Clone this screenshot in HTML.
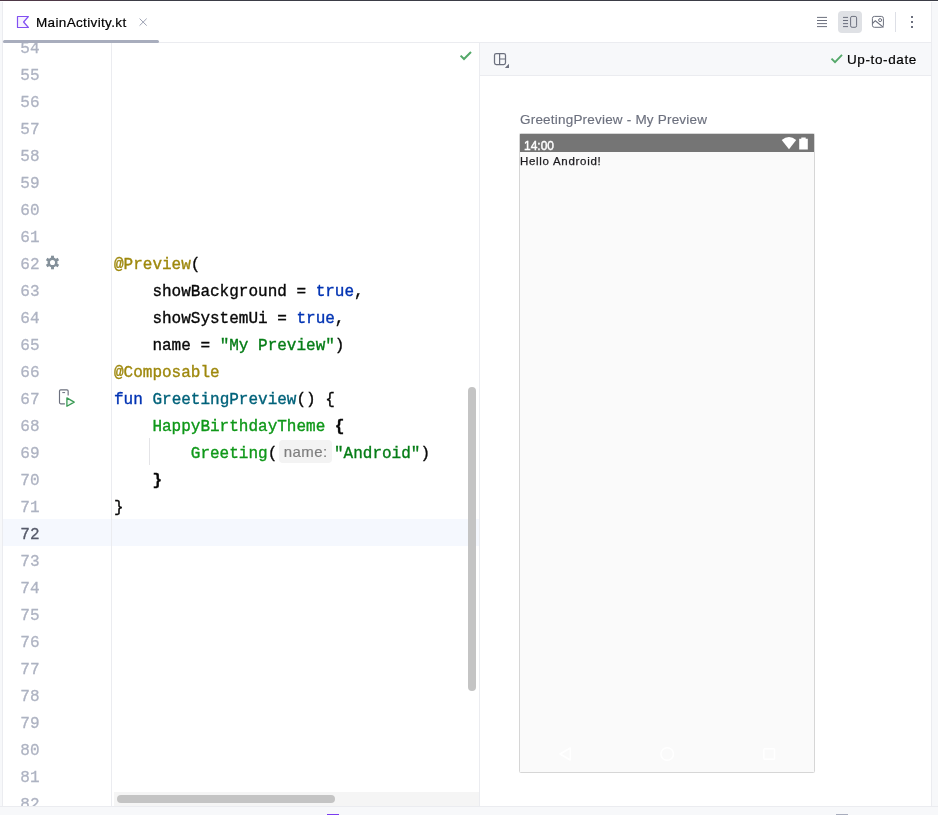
<!DOCTYPE html>
<html><head><meta charset="utf-8"><title>MainActivity.kt</title>
<style>
*{box-sizing:border-box;margin:0;padding:0}
html,body{width:938px;height:815px;overflow:hidden;background:#fff}
body{position:relative;font-family:"Liberation Sans",sans-serif;font-size:13px;color:#000}
.abs{position:absolute}
#tabname,#uptodate,#ptitle,#clock,#hello,#editor{will-change:transform}
#topline{left:0;top:0;width:938px;height:1px;background:linear-gradient(90deg,#4e3846 0,#4e3846 60px,#3b3d46 140px,#3b3d46 100%)}
#lstrip{left:0;top:2px;width:3px;height:804px;background:#f7f8fa;border-right:1px solid #ebecf0}
#rstrip{left:931px;top:2px;width:7px;height:804px;background:#f7f8fa;border-left:1px solid #ebecf0}
#tabborder{left:3px;top:42px;width:928px;height:1px;background:#ebecf0}
#tabul{left:3px;top:40px;width:156px;height:3px;background:#a8adbd;border-radius:1.5px}
#tabname{-webkit-text-stroke:0.2px #000;left:36px;top:15px;height:16px;line-height:16px;font-size:13.5px;letter-spacing:0.35px;color:#000;white-space:nowrap}
#vdiv{left:479px;top:43px;width:1px;height:763px;background:#ebecf0}
#ptool{left:480px;top:43px;width:451px;height:33px;background:#f7f8fa;border-bottom:1px solid #ebecf0}
#bottom{left:0;top:806px;width:938px;height:9px;background:#f7f8fa;border-top:1px solid #ebecf0}
#gutterline{left:111px;top:43px;width:1px;height:763px;background:#ebecf0}
#editor{left:3px;top:43px;width:476px;height:763px;overflow:hidden}
#curline{left:0;top:476px;width:476px;height:27px;background:#f5f8fe}
.ln{position:absolute;margin-top:3px;left:0;width:36.5px;-webkit-text-stroke:0.3px;text-align:right;height:27px;line-height:27px;font-family:"Liberation Mono",monospace;font-size:16px;color:#aeb3c2;white-space:pre}
.cl{position:absolute;margin-top:3px;left:111px;-webkit-text-stroke:0.35px;height:27px;line-height:27px;font-family:"Liberation Mono",monospace;font-size:16px;color:#080808;white-space:pre}
.an{color:#9e880d}.kw{color:#0033b3}.st{color:#067d17}.fn{color:#00627a}.cp{color:#0f9819}
b{font-weight:bold}
#hint{position:absolute;left:276px;top:397px;width:53px;height:23px;border-radius:4px;background:#f3f3f3;color:#7f7f7f;-webkit-text-stroke:0.2px #7f7f7f;font-family:"Liberation Sans",sans-serif;font-size:15px;letter-spacing:0.4px;line-height:23px;text-align:center;padding-left:0.4px}
#vthumb{left:468px;top:387px;width:8px;height:304px;border-radius:4px;background:#c4c4c4}
#htrack{left:114px;top:792px;width:365px;height:14px;background:#f5f5f5}
#hthumb{left:117px;top:795px;width:218px;height:8px;border-radius:4px;background:#c4c4c4}
#ptitle{-webkit-text-stroke:0.15px #6c707e;left:520px;top:112px;height:16px;line-height:16px;font-size:13.5px;letter-spacing:0.2px;color:#6c707e;white-space:nowrap}
#phone{left:519px;top:133px;width:296px;height:640px;background:#fafafa;border:1px solid #d6d6d6;border-radius:1.5px}
#sbar{left:520px;top:134px;width:294px;height:18px;background:#757575}
#clock{left:524px;top:138px;height:16px;line-height:16px;font-size:12px;color:#fff;-webkit-text-stroke:0.4px #fff;white-space:nowrap}
#hello{left:520px;top:154px;height:15px;line-height:15px;font-size:11.5px;letter-spacing:0.7px;-webkit-text-stroke:0.25px #1c1b1f;color:#1c1b1f;white-space:nowrap}
#uptodate{-webkit-text-stroke:0.2px #000;left:847px;top:52px;height:16px;line-height:16px;font-size:13.5px;letter-spacing:0.62px;color:#000;white-space:nowrap}
#selbtn{left:838px;top:11px;width:24px;height:22px;border-radius:4px;background:#dfe1e5}
#tdiv{left:895px;top:12px;width:1px;height:20px;background:#dddfe6}
svg{position:absolute;overflow:visible}
</style></head><body>
<div id="topline" class="abs"></div>
<div id="lstrip" class="abs"></div>
<div id="rstrip" class="abs"></div>
<div id="tabborder" class="abs"></div>
<div id="tabul" class="abs"></div>
<div id="tabname" class="abs">MainActivity.kt</div>
<div id="ptool" class="abs"></div>
<div id="vdiv" class="abs"></div>
<div id="editor" class="abs">
<div id="curline" class="abs"></div>
<!--LINES-->
<div class="ln" style="top:-10px">54</div>
<div class="ln" style="top:17px">55</div>
<div class="ln" style="top:44px">56</div>
<div class="ln" style="top:71px">57</div>
<div class="ln" style="top:98px">58</div>
<div class="ln" style="top:125px">59</div>
<div class="ln" style="top:152px">60</div>
<div class="ln" style="top:179px">61</div>
<div class="ln" style="top:206px">62</div>
<div class="cl" style="top:206px"><span class="an">@Preview</span>(</div>
<div class="ln" style="top:233px">63</div>
<div class="cl" style="top:233px">    showBackground = <span class="kw">true</span>,</div>
<div class="ln" style="top:260px">64</div>
<div class="cl" style="top:260px">    showSystemUi = <span class="kw">true</span>,</div>
<div class="ln" style="top:287px">65</div>
<div class="cl" style="top:287px">    name = <span class="st">"My Preview"</span>)</div>
<div class="ln" style="top:314px">66</div>
<div class="cl" style="top:314px"><span class="an">@Composable</span></div>
<div class="ln" style="top:341px">67</div>
<div class="cl" style="top:341px"><span class="kw">fun</span> <span class="fn">GreetingPreview</span>() {</div>
<div class="ln" style="top:368px">68</div>
<div class="cl" style="top:368px">    <span class="cp">HappyBirthdayTheme</span> <b>{</b></div>
<div class="ln" style="top:395px">69</div>
<div class="cl" style="top:395px">        <span class="cp">Greeting</span>(</div>
<div id="hint">name:</div>
<div class="cl" style="top:395px;left:331px"><span class="st">"Android"</span>)</div>
<div class="ln" style="top:422px">70</div>
<div class="cl" style="top:422px">    <b>}</b></div>
<div class="ln" style="top:449px">71</div>
<div class="cl" style="top:449px">}</div>
<div class="ln" style="top:476px;color:#565a6a">72</div>
<div class="ln" style="top:503px">73</div>
<div class="ln" style="top:530px">74</div>
<div class="ln" style="top:557px">75</div>
<div class="ln" style="top:584px">76</div>
<div class="ln" style="top:611px">77</div>
<div class="ln" style="top:638px">78</div>
<div class="ln" style="top:665px">79</div>
<div class="ln" style="top:692px">80</div>
<div class="ln" style="top:719px">81</div>
<div class="ln" style="top:746px">82</div>
</div>
<div id="gutterline" class="abs"></div>
<div id="vthumb" class="abs"></div>
<div id="htrack" class="abs"></div>
<div id="hthumb" class="abs"></div>
<div id="selbtn" class="abs"></div>
<div id="tdiv" class="abs"></div>
<div id="uptodate" class="abs">Up-to-date</div>
<div id="ptitle" class="abs">GreetingPreview - My Preview</div>
<div id="phone" class="abs"></div>
<div id="sbar" class="abs"></div>
<div id="clock" class="abs">14:00</div>
<div id="hello" class="abs">Hello Android!</div>
<div id="bottom" class="abs"></div>
<!--ICONS-->
<svg id="ic-kt" style="left:16px;top:15px" width="14" height="14" viewBox="16 15 14 14"><path d="M17.5 16.5H28.4L23.6 22L28.4 27.5H17.5Z" fill="#f7f3ff" stroke="#8250f2" stroke-width="1.2" stroke-linejoin="round"/></svg>
<svg id="ic-close" style="left:138px;top:17px" width="10" height="10" viewBox="138 17 10 10"><path d="M139.6 18.6L146.7 25.6M146.7 18.6L139.6 25.6" stroke="#9da2b3" stroke-width="1" fill="none"/></svg>
<svg id="ic-ham" style="left:816px;top:15px" width="12" height="14" viewBox="816 15 12 14"><path d="M817 17.4H827M817 20.5H827M817 23.6H827M817 26.6H827" stroke="#6c707e" stroke-width="1" fill="none"/></svg>
<svg id="ic-split" style="left:842px;top:15px" width="16" height="14" viewBox="842 15 16 14"><path d="M843 17.4H848M843 20.5H848M843 23.6H848M843 26.6H848" stroke="#6c707e" stroke-width="1" fill="none"/><rect x="850.6" y="16.4" width="6" height="10.9" rx="1.5" fill="none" stroke="#6c707e" stroke-width="1"/></svg>
<svg id="ic-img" style="left:871px;top:15px" width="14" height="14" viewBox="871 15 14 14"><rect x="872.4" y="16.4" width="11" height="10.9" rx="2" fill="none" stroke="#6c707e" stroke-width="1"/><circle cx="880.1" cy="20.1" r="1.5" fill="none" stroke="#6c707e" stroke-width="1"/><path d="M872.4 23.5L875.3 20.7L883.5 27.4" fill="none" stroke="#6c707e" stroke-width="1.15"/></svg>
<svg id="ic-dots" style="left:910px;top:15px" width="4" height="14" viewBox="910 15 4 14"><path d="M911 16h2v2h-2zM911 21h2v2h-2zM911 26h2v2h-2z" fill="#6c707e"/></svg>
<svg id="ic-ok1" style="left:458px;top:50px" width="16" height="12" viewBox="458 50 16 12"><path d="M460.6 55.6L464 59L471 52" fill="none" stroke="#54a869" stroke-width="2"/></svg>
<svg id="ic-ok2" style="left:829px;top:52px" width="16" height="13" viewBox="829 52 16 13"><path d="M831.5 58.6L835 62.1L842 54.9" fill="none" stroke="#54a869" stroke-width="1.9"/></svg>
<svg id="ic-layout" style="left:493px;top:52px" width="18" height="18" viewBox="493 52 18 18"><rect x="494.5" y="53.5" width="11" height="11" rx="1.7" fill="none" stroke="#6c707e" stroke-width="1.25"/><path d="M499.6 53.5V64.5M499.6 59H505.5" stroke="#6c707e" stroke-width="1.2" fill="none"/><path d="M509 63.8V68H504.8Z" fill="#6c707e"/></svg>
<svg id="ic-gear" style="left:45px;top:255px" width="15" height="15" viewBox="-7.5 -7.5 15 15"><g fill="#84909a"><rect x="-1.45" y="-6.8" width="2.9" height="3"/><rect x="-1.45" y="-6.8" width="2.9" height="3" transform="rotate(60)"/><rect x="-1.45" y="-6.8" width="2.9" height="3" transform="rotate(120)"/><rect x="-1.45" y="-6.8" width="2.9" height="3" transform="rotate(180)"/><rect x="-1.45" y="-6.8" width="2.9" height="3" transform="rotate(240)"/><rect x="-1.45" y="-6.8" width="2.9" height="3" transform="rotate(300)"/></g><circle cx="0" cy="0" r="3.8" fill="none" stroke="#84909a" stroke-width="2.5"/></svg>
<svg id="ic-run" style="left:58px;top:388px" width="18" height="20" viewBox="58 388 18 20"><path d="M68.15 395.6V391.1Q68.15 389.9 66.95 389.9H60.7Q59.5 389.9 59.5 391.1V402.6Q59.5 403.8 60.7 403.8H64.9" fill="none" stroke="#6c707e" stroke-width="1.15"/><path d="M62.7 392.6H64.7" stroke="#6c707e" stroke-width="1" stroke-linecap="round"/><path d="M66.9 397.9L74.2 402.1L66.9 406.3Z" fill="#f2faf4" stroke="#3a9a54" stroke-width="1.3" stroke-linejoin="round"/></svg>
<svg id="ic-wifi" style="left:781px;top:137px" width="16" height="13" viewBox="781 137 16 13"><path d="M781.7 140Q789 134.2 796.2 140L789 149.2Z" fill="#fff"/></svg>
<svg id="ic-bat" style="left:799px;top:137px" width="10" height="13" viewBox="799 137 10 13"><path d="M799.2 138.8h2.1v-1.4h4.4v1.4h2.1v10.8h-8.6z" fill="#fff"/></svg>
<svg id="ic-nav" style="left:555px;top:744px" width="230" height="20" viewBox="555 744 230 20"><path d="M570.3 748V760L560 754Z" fill="none" stroke="#fff" stroke-width="1.5" stroke-linejoin="round"/><circle cx="667.2" cy="754" r="6.3" fill="none" stroke="#fff" stroke-width="1.5"/><rect x="763.9" y="748.7" width="10.6" height="10.6" rx="0.8" fill="none" stroke="#fff" stroke-width="1.5"/></svg>
<div class="abs" style="left:327px;top:814px;width:12px;height:1px;background:#7a3cf0"></div>
<div class="abs" style="left:836px;top:814px;width:12px;height:1px;background:#a8adbd"></div>
<div class="abs" style="left:149px;top:438px;width:1px;height:27px;background:#e4e4e7"></div>
</body></html>
